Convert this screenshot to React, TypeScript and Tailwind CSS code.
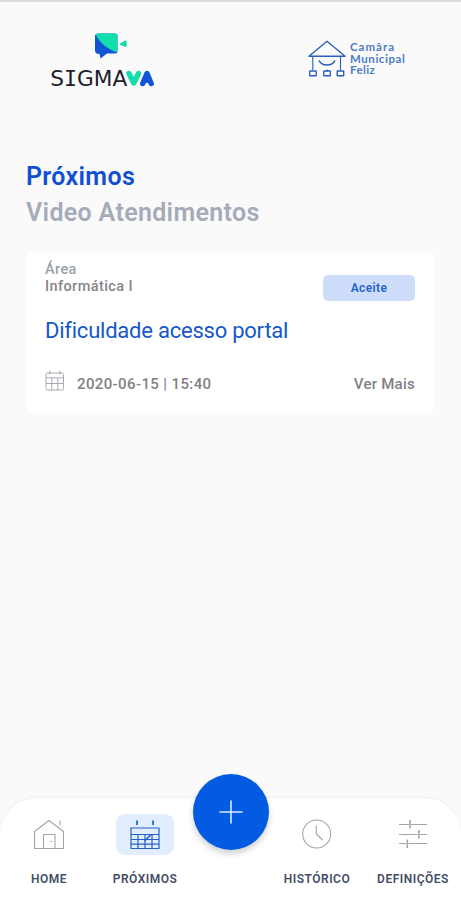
import type { ReactNode } from 'react';

function SigmaLogo() {
  return (
    <svg width="112" height="68" viewBox="0 0 112 68" className="block">
      <defs>
        <clipPath id="bubble">
          <path d="M49.5 3.5H66Q68.5 3.5 68.5 6V21Q68.5 23.5 66 23.5H58L51.5 28.5L50.5 24Q46 24 46 20.5V6.5Q46 3.5 49.5 3.5Z" />
        </clipPath>
      </defs>
      <g clipPath="url(#bubble)">
        <rect x="44" y="2" width="26" height="27" fill="#1055d6" />
        <path d="M46 2C49 13 60 20 69 22.5V2Z" fill="#12deaa" />
      </g>
      <path d="M71.5 13.2L76 10.6Q77.7 10.2 77.7 12V15.5Q77.7 17.2 76 16.8L71.5 15Q70.2 14.2 71.5 13.2Z" fill="#12deaa" />
      <text x="1.2" y="56" textLength="77" lengthAdjust="spacingAndGlyphs" fontSize="21" fontFamily="'DejaVu Sans', sans-serif" fill="#20212b">
        S<tspan fontFamily="'DejaVu Sans Mono', monospace">I</tspan>GMA
      </text>
      <path d="M80 43.5L84.7 53L89.5 43.5" fill="none" stroke="#12deaa" strokeWidth="5.4" strokeLinecap="round" strokeLinejoin="round" />
      <path d="M93.8 53.5L98 43.5L102.2 53.5" fill="none" stroke="#1055d6" strokeWidth="5.4" strokeLinecap="round" strokeLinejoin="round" />
      <circle cx="98" cy="51.3" r="1.8" fill="#1055d6" />
    </svg>
  );
}

function TownHallLogo() {
  return (
    <svg width="38" height="38" viewBox="0 0 38 38" fill="none" stroke="#285fc0" strokeWidth="1.4" className="block shrink-0">
      <path d="M1 17.2L19 2.2L37 17.2Z" strokeLinejoin="round" />
      <path d="M4.8 17.5V31M32.5 17.5V31M19 30.5V33" strokeWidth="1.1" />
      <path d="M11 21.5C14 27.5 24 27.5 27 21.5" strokeWidth="1.6" />
      <rect x="1.7" y="32" width="6.5" height="4.8" rx=".5" />
      <rect x="15.8" y="32" width="6.5" height="4.8" rx=".5" />
      <rect x="29.2" y="32" width="6.5" height="4.8" rx=".5" />
    </svg>
  );
}

function CardCalendar() {
  return (
    <svg width="20" height="21" viewBox="0 0 20 21" fill="none" stroke="#a5abb0" strokeWidth="1" className="block">
      <rect x="1" y="3" width="17.5" height="17" rx="1.5" />
      <path d="M1 7.8H18.5M1 13.5H18.5M6.8 8V20M12.8 8V20M4.8 .8V4.5M14.8 .8V4.5" />
    </svg>
  );
}

function HomeIcon() {
  return (
    <svg width="32" height="32" viewBox="0 0 32 32" fill="none" stroke="#a0a6ad" strokeWidth="1.1">
      <path d="M1.5 12.5L16 1.5L30.5 12.5V29.5H1.5Z" strokeLinejoin="round" />
      <path d="M10.5 29.5V15.5H22V29.5M27 1.5V6M17.2 22.5H19" />
    </svg>
  );
}

function ScheduleIcon() {
  return (
    <svg width="32" height="32" viewBox="0 0 32 32" fill="none" stroke="#2462c8" strokeWidth="1.2">
      <path d="M2 9H30V29.5H2ZM2 15.5H30M2 20.5H30M2 25.2H30M9 15.5V29.5M16 15.5V29.5M23 15.5V29.5" />
      <path d="M8 1.5V6M24 1.5V6M15.5 22L22 15.5" strokeWidth="1.7" />
    </svg>
  );
}

function HistoryIcon() {
  return (
    <svg width="32" height="32" viewBox="0 0 32 32" fill="none" stroke="#a0a6ad" strokeWidth="1.1">
      <circle cx="15.7" cy="15" r="14" />
      <path d="M15.3 6.5V15L21.5 21" />
    </svg>
  );
}

function SettingsIcon() {
  return (
    <svg width="32" height="32" viewBox="0 0 32 32" fill="none" stroke="#a0a6ad" strokeWidth="1.1">
      <path d="M2 5.5H12M14 5.5H30M2 15.5H20.5M23 15.5H30M2 24.5H9M11.5 24.5H30" />
      <path d="M13 1V9.5M21.8 11V19.5M10.3 20.5V29" strokeWidth="1.6" />
    </svg>
  );
}

function NavItem({ icon, label, active = false }: { icon: ReactNode; label: string; active?: boolean }) {
  return (
    <div className="flex flex-1 flex-col items-center">
      <div className={active ? 'flex h-[41px] w-[58px] items-center justify-center rounded-[9px] bg-[#e2edfd]' : 'flex h-[41px] w-[58px] items-center justify-center'}>
        {icon}
      </div>
      <span className="mt-4 whitespace-nowrap text-[12px] leading-4 font-semibold tracking-[0.5px] text-[#444d66]">{label}</span>
    </div>
  );
}

export default function App() {
  return (
    <div className="flex h-[900px] w-[461px] flex-col overflow-hidden border-t-2 border-[#dcdcdc] bg-[#fafafa] font-['Roboto',sans-serif]">
      <header className="flex h-[98px] shrink-0 justify-between pt-7 pr-[52px] pl-[49px]">
        <SigmaLogo />
        <div className="mt-[9px] flex w-[101px] gap-[4px]">
          <TownHallLogo />
          <div className="mt-[2px] whitespace-nowrap font-['Lato',sans-serif] text-[11.5px] leading-[11.5px] font-bold text-[#4d7cc8]">
            <p className="tracking-[1px]">Camâra</p>
            <p className="tracking-[0.55px]">Municipal</p>
            <p className="tracking-[0.4px]">Feliz</p>
          </div>
        </div>
      </header>

      <main className="flex-1 px-[26px] pt-[59px]">
        <h1 className="text-[25px] leading-9 font-semibold tracking-[0.33px] whitespace-nowrap">
          <span className="block text-[#1150d0]">Próximos</span>
          <span className="block text-[#a5abb8]">Video Atendimentos</span>
        </h1>

        <article className="mt-[22px] h-[159px] rounded-md bg-white pt-[8px] pr-5 pl-[19px]">
          <div className="flex justify-between">
            <div className="text-[14.5px] leading-[17px] font-medium">
              <p className="tracking-[0.4px] text-[#9a9fa8]">Área</p>
              <p className="tracking-[0.4px] text-[#85878a]">Informática I</p>
            </div>
            <span className="mt-[14px] flex h-[26px] w-[92px] items-center justify-center rounded-[5px] bg-[#cedefa] text-[12px] font-semibold tracking-[0.4px] text-[#2563c9]">Aceite</span>
          </div>
          <h2 className="mt-[16px] text-[22px] leading-7 tracking-[-0.23px] whitespace-nowrap text-[#1658c6]">Dificuldade acesso portal</h2>
          <div className="mt-[22px] flex items-center text-[15px] leading-5 font-medium text-[#808285]">
            <CardCalendar />
            <time className="mt-[7px] ml-[12px] tracking-[0.38px]">2020-06-15 | 15:40</time>
            <span className="mt-[7px] ml-auto tracking-[0.25px]">Ver Mais</span>
          </div>
        </article>
      </main>

      <nav className="flex h-[102px] shrink-0 rounded-t-[36px] bg-white pt-[16px] pl-px shadow-[0_-1px_2px_rgba(0,0,0,0.05)]">
        <NavItem icon={<HomeIcon />} label="HOME" />
        <NavItem icon={<ScheduleIcon />} label="PRÓXIMOS" active />
        <div className="-mt-[40px] flex h-[76px] w-[76px] shrink-0 items-center justify-center rounded-full bg-[#035be2] shadow-[0_4px_6px_rgba(0,0,0,0.18)]">
          <svg width="24" height="24" viewBox="0 0 24 24" stroke="#d9e9ff" strokeWidth="1.6">
            <path d="M12 .5V23.5M.5 12H23.5" />
          </svg>
        </div>
        <NavItem icon={<HistoryIcon />} label="HISTÓRICO" />
        <NavItem icon={<SettingsIcon />} label="DEFINIÇÕES" />
      </nav>
    </div>
  );
}
